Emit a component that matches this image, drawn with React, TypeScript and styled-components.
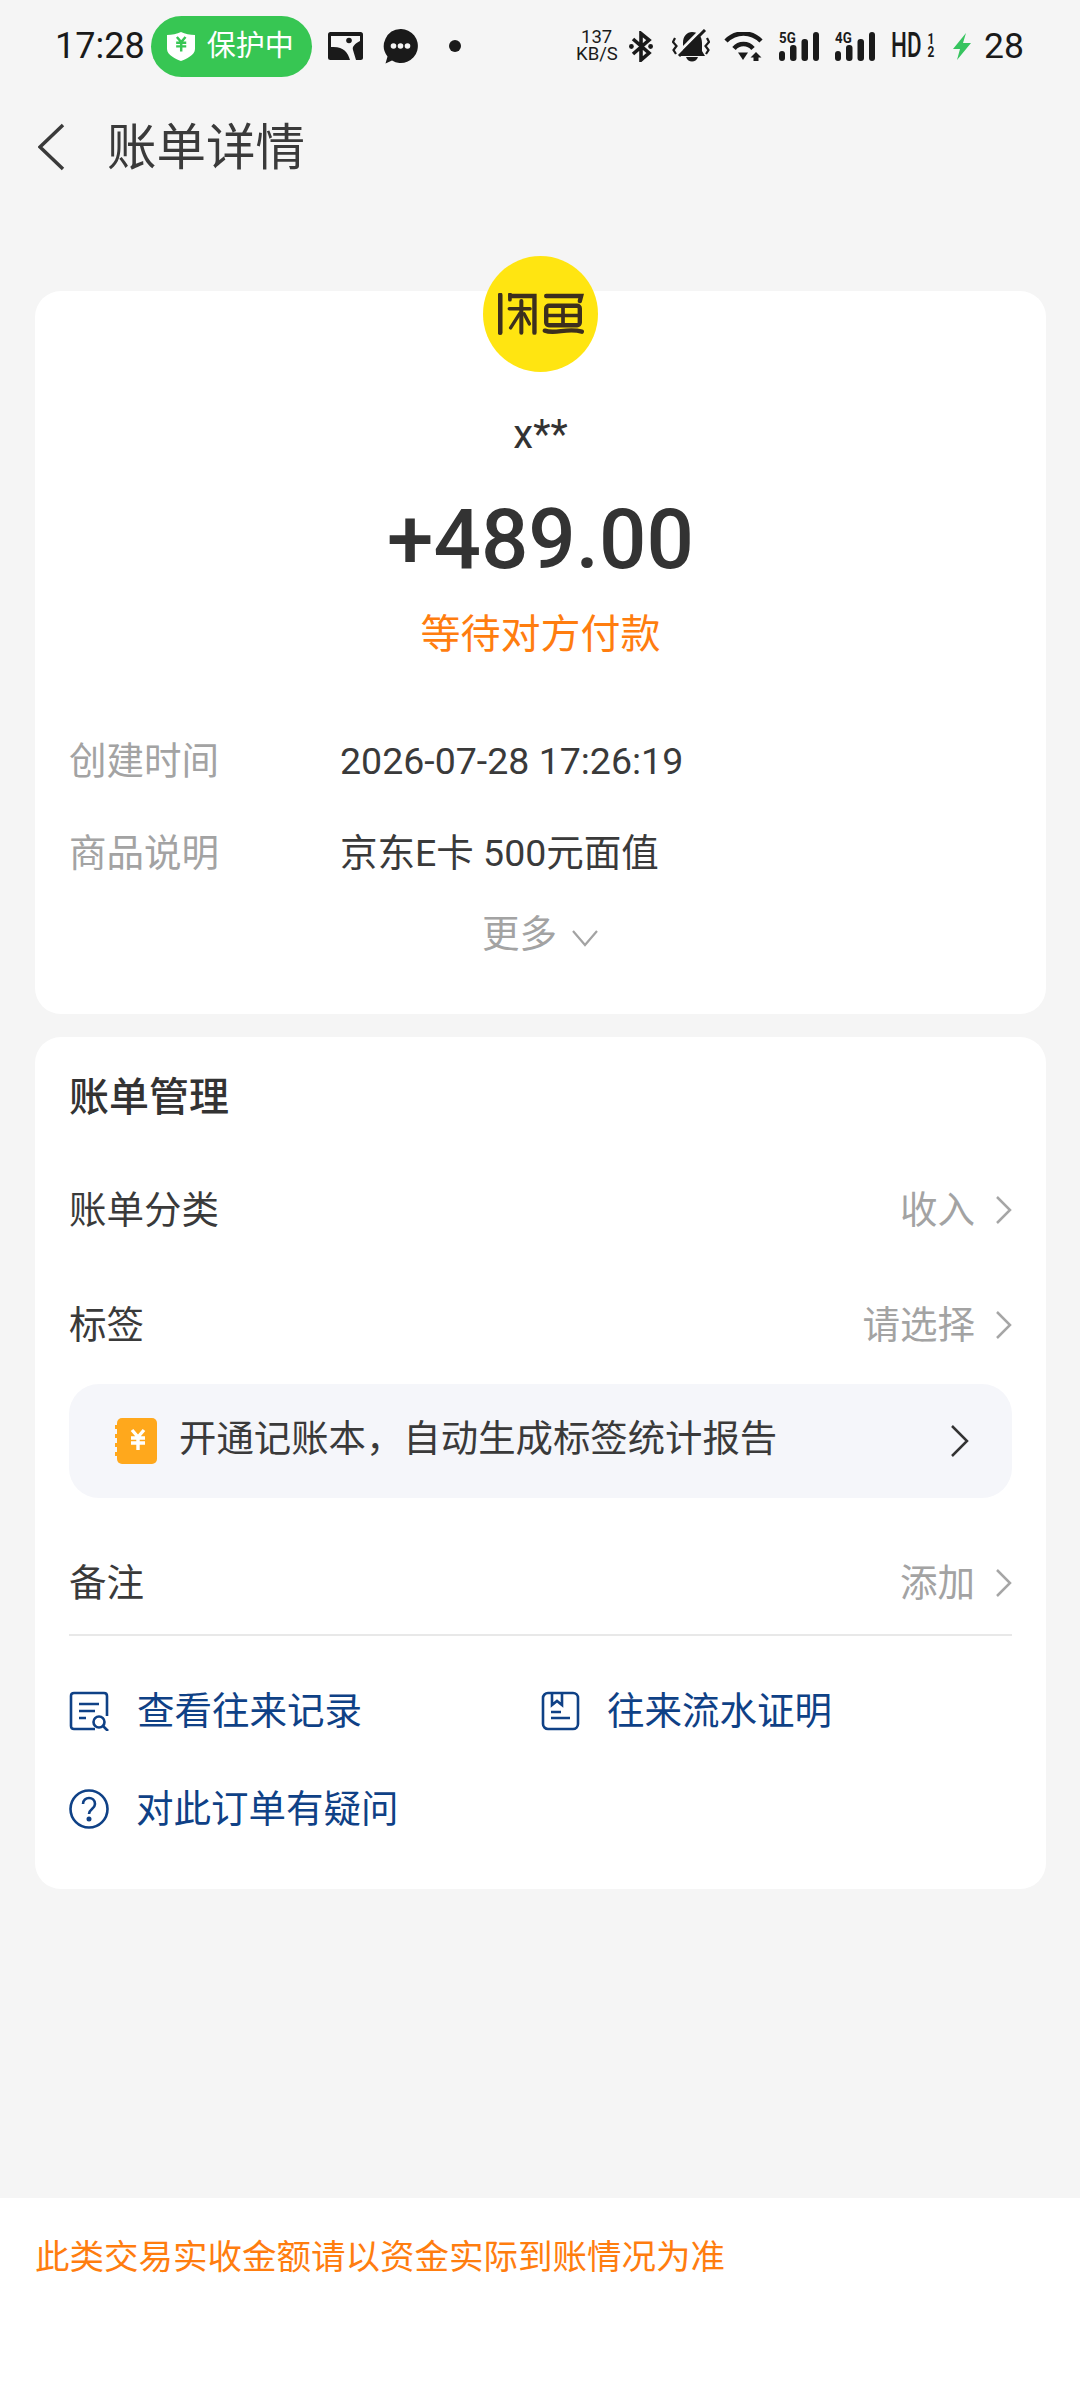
import React from 'react';
import styled, { createGlobalStyle } from 'styled-components';

const GlobalStyle = createGlobalStyle`
  html, body {
    margin: 0;
    padding: 0;
    background: #f5f5f5;
    font-family: Roboto, "Noto Sans CJK SC", sans-serif;
  }
`;

const Page = styled.div`
  width: 1080px;
  height: 2400px;
  display: flex;
  flex-direction: column;
  overflow: hidden;
  background: #f5f5f5;
  color: #333;
`;

const StatusBar = styled.div`
  height: 92px;
  flex: none;
  display: flex;
  align-items: center;
  justify-content: space-between;
  padding: 0 56px 0 55px;
  color: #1a1a1a;
`;

const StatusGroup = styled.div`
  display: flex;
  align-items: center;
`;

const Clock = styled.span`
  font-size: 36px;
  line-height: 40px;
`;

const Pill = styled.div`
  width: 161px;
  height: 61px;
  margin-left: 6px;
  border-radius: 31px;
  background: #37c653;
  color: #fff;
  display: flex;
  align-items: center;
  padding-left: 16px;
  box-sizing: border-box;
  font-size: 29px;
  line-height: 40px;
  gap: 12px;
`;

const Glyph = styled.svg<{ $gap?: number }>`
  display: block;
  flex: none;
  margin-left: ${(p) => p.$gap ?? 0}px;
`;

const Speed = styled.div`
  width: 41px;
  font-size: 18.5px;
  line-height: 17px;
  text-align: center;
  white-space: nowrap;
`;

const SignalWrap = styled.div<{ $gap: number }>`
  position: relative;
  width: 40px;
  height: 29px;
  margin-left: ${(p) => p.$gap}px;
`;

const SignalLabel = styled.span`
  position: absolute;
  left: 0;
  top: 0;
  font-size: 14px;
  line-height: 12px;
  font-weight: 700;
  transform: scaleX(0.95);
  transform-origin: left center;
`;

const Hd = styled.div`
  display: flex;
  align-items: center;
  margin-left: 16px;
  width: 44px;
`;

const HdText = styled.span`
  width: 36px;
  font-size: 35px;
  line-height: 32px;
  font-weight: 500;
  transform: scaleX(0.64);
  transform-origin: left center;
`;

const HdCard = styled.span`
  width: 8px;
  font-size: 14px;
  line-height: 13px;
  font-weight: 700;
  text-align: center;
  display: flex;
  flex-direction: column;
  transform: scaleX(0.85);
`;

const Battery = styled.span`
  font-size: 35.5px;
  line-height: 40px;
  margin-left: 13px;
`;

const NavBar = styled.div`
  height: 108px;
  flex: none;
  display: flex;
  align-items: center;
  padding: 2px 0 0 38px;
  box-sizing: border-box;
`;

const Title = styled.h1`
  margin: 0 0 0 42px;
  padding-top: 1px;
  font-size: 49.5px;
  line-height: 60px;
  font-weight: 400;
  color: #3a3a3a;
`;

const Card = styled.section<{ $top: number }>`
  margin: ${(p) => p.$top}px 34px 0 35px;
  background: #fff;
  border-radius: 26px;
  padding: 0 34px;
  flex: none;
  display: flex;
  flex-direction: column;
`;

const Avatar = styled.div`
  width: 115px;
  height: 116px;
  margin: -35px auto 0;
  border-radius: 50%;
  background: #ffe511;
  display: flex;
  align-items: center;
  justify-content: center;
`;

const Name = styled.div`
  margin-top: 38px;
  text-align: center;
  font-size: 40px;
  line-height: 50px;
`;

const Amount = styled.div`
  margin-top: 30px;
  text-align: center;
  font-size: 83.5px;
  line-height: 100px;
  font-weight: 500;
  color: #333;
`;

const Waiting = styled.div`
  margin-top: 17px;
  text-align: center;
  font-size: 40px;
  line-height: 56px;
  color: #ff7d0f;
`;

const InfoRow = styled.div<{ $top: number }>`
  margin-top: ${(p) => p.$top}px;
  display: flex;
  align-items: center;
  height: 50px;
  font-size: 37.5px;
  line-height: 50px;
`;

const InfoLabel = styled.span`
  width: 271px;
  color: #a3a3a3;
`;

const InfoValue = styled.span`
  color: #3a3a3a;
`;

const More = styled.div`
  margin: 31px 0 55px;
  height: 50px;
  display: flex;
  align-items: center;
  justify-content: center;
  gap: 14px;
  font-size: 37.5px;
  line-height: 50px;
  color: #a3a3a3;
`;

const MoreArrow = styled.span`
  margin-top: 8px;
`;

const SectionTitle = styled.h2`
  margin: 36px 0 0;
  font-size: 40px;
  line-height: 50px;
  font-weight: 500;
  color: #333;
`;

const ManageRow = styled.div<{ $top: number }>`
  margin-top: ${(p) => p.$top}px;
  height: 50px;
  display: flex;
  align-items: center;
  justify-content: space-between;
  font-size: 37.5px;
  line-height: 50px;
  color: #3a3a3a;
`;

const RowValue = styled.div`
  display: flex;
  align-items: center;
  gap: 20px;
  color: #a3a3a3;
`;

const Banner = styled.div`
  margin-top: 34px;
  height: 114px;
  border-radius: 30px;
  background: #f5f6fa;
  display: flex;
  align-items: center;
  padding: 0 43px 0 46px;
  font-size: 37.4px;
  line-height: 50px;
  color: #3a3a3a;
`;

const BannerText = styled.span`
  flex: 1;
  margin-left: 22px;
  padding-bottom: 5px;
`;

const Divider = styled.div`
  margin-top: 26px;
  height: 2px;
  background: #e8e8e8;
`;

const LinkGrid = styled.div`
  margin: 50px 0 55px;
  display: grid;
  grid-template-columns: 472px 1fr;
  row-gap: 48px;
`;

const LinkItem = styled.div`
  height: 50px;
  display: flex;
  align-items: center;
  gap: 27px;
  font-size: 37.5px;
  line-height: 50px;
  color: #0f4186;
`;

const Notice = styled.footer`
  margin-top: auto;
  height: 202px;
  flex: none;
  background: #fff;
  box-sizing: border-box;
  padding: 34px 35px 0;
  font-size: 34.5px;
  line-height: 50px;
  color: #ff7d0f;
`;

const Chevron = ({ dir = 'right', w, h, color, sw = 3 }: { dir?: 'right' | 'down' | 'left'; w: number; h: number; color: string; sw?: number }) => {
  const points =
    dir === 'right'
      ? `2,2 ${w - 2},${h / 2} 2,${h - 2}`
      : dir === 'left'
      ? `${w - 2},2 2,${h / 2} ${w - 2},${h - 2}`
      : `2,2 ${w / 2},${h - 2} ${w - 2},2`;
  return (
    <Glyph width={w} height={h} viewBox={`0 0 ${w} ${h}`}>
      <polyline points={points} fill="none" stroke={color} strokeWidth={sw} />
    </Glyph>
  );
};

const Bars = () => (
  <Glyph width="40" height="29" viewBox="0 0 40 29">
    <rect x="0" y="19" width="6" height="10" rx="3" fill="#1a1a1a" />
    <rect x="11" y="13" width="6.5" height="16" rx="3" fill="#1a1a1a" />
    <rect x="22.5" y="7" width="6.5" height="22" rx="3" fill="#1a1a1a" />
    <rect x="34" y="0" width="6" height="29" rx="3" fill="#1a1a1a" />
  </Glyph>
);

const YenMark = ({ x, y, s, color }: { x: number; y: number; s: number; color: string }) => (
  <g transform={`translate(${x} ${y}) scale(${s})`} fill="none" stroke={color} strokeWidth="3.4">
    <path d="M4 0 L10 7 L16 0 M3 8 H17 M3 13 H17 M10 7 V20" />
  </g>
);

const XianyuLogo = () => (
  <svg width="86" height="42" viewBox="55 68 255 125" fill="none" stroke="#3c2f1e" strokeLinecap="round">
    {/* left mark */}
    <path d="M61 74 V186" strokeWidth="14" />
    <path d="M90 72 V88" strokeWidth="11" />
    <path d="M92 77 H163 V186" strokeWidth="13" />
    <path d="M88 115 H150" strokeWidth="10" />
    <path d="M124 92 V186" strokeWidth="12" />
    <path d="M120 128 L92 172 M132 130 L148 160" strokeWidth="10" />
    {/* right mark */}
    <path d="M198 77 H302 L298 92" strokeWidth="13" />
    <rect x="198" y="106" width="100" height="58" rx="8" strokeWidth="13" />
    <path d="M198 135 H298" strokeWidth="11" />
    <path d="M248 106 V164" strokeWidth="11" />
    <path d="M194 180 C225 192 260 170 304 183" strokeWidth="13" />
  </svg>
);

const App = () => {
  return (
    <>
      <GlobalStyle />
      <Page>
        <StatusBar>
          <StatusGroup>
            <Clock>17:28</Clock>
            <Pill>
              <Glyph width="28" height="29" viewBox="0 0 28 29">
                <path d="M0 3 C5 3 10 2 14 0 C18 2 23 3 28 3 V17 C28 23 19 27 14 29 C9 27 0 23 0 17 Z" fill="#fff" />
                <YenMark x={7} y={5} s={0.72} color="#37c653" />
              </Glyph>
              <span>保护中</span>
            </Pill>
            <Glyph $gap={16} width="35" height="28" viewBox="0 0 35 28">
              <rect width="35" height="28" rx="2.5" fill="#1a1a1a" />
              <path d="M3 4 H32 V9 C27 12 24 14 25 18 L28 28 H22 C20 20 15 14 3 15 Z" fill="#f5f5f5" />
              <circle cx="21" cy="8.5" r="2.8" fill="#1a1a1a" />
            </Glyph>
            <Glyph $gap={20} width="35" height="35" viewBox="0 0 35 35">
              <path d="M17.5 0 A17 17 0 1 1 9 31.5 L2.5 34.5 L4.5 27.5 A17 17 0 0 1 17.5 0 Z" fill="#1a1a1a" />
              <circle cx="10.5" cy="17" r="2.8" fill="#f5f5f5" />
              <circle cx="17.5" cy="17" r="2.8" fill="#f5f5f5" />
              <circle cx="24.5" cy="17" r="2.8" fill="#f5f5f5" />
            </Glyph>
            <Glyph $gap={31} width="12" height="12" viewBox="0 0 12 12">
              <circle cx="6" cy="6" r="6" fill="#1a1a1a" />
            </Glyph>
          </StatusGroup>
          <StatusGroup>
            <Speed>137<br />KB/S</Speed>
            <Glyph $gap={12} width="24" height="31" viewBox="0 0 24 31">
              <path d="M4 8 L20 22 L12 29 V2.5 L20 9 L4 23" fill="none" stroke="#1a1a1a" strokeWidth="3.6" />
              <circle cx="2.4" cy="15.5" r="2.4" fill="#1a1a1a" />
              <circle cx="21.6" cy="15.5" r="2.4" fill="#1a1a1a" />
            </Glyph>
            <Glyph $gap={19} width="38" height="34" viewBox="0 0 38 34">
              <path d="M8 27 L11 22 V14 C11 7 15 3 20 3 C26 3 30 7 30 14 V22 L33 27 Z" fill="#1a1a1a" />
              <path d="M14 28 H26 C24 34 16 34 14 28 Z" fill="#1a1a1a" />
              <path d="M3 27 L29 1" stroke="#f5f5f5" strokeWidth="3" />
              <path d="M7 27 L33 1" stroke="#1a1a1a" strokeWidth="3" />
              <path d="M3 9 L1 13 L4.5 17 L1.5 21 L4 25 M35 9 L37 13 L33.5 17 L36.5 21 L34 25" fill="none" stroke="#1a1a1a" strokeWidth="2.2" />
            </Glyph>
            <Glyph $gap={14} width="39" height="29" viewBox="0 0 39 29">
              <path d="M2 9 C12 -1 27 -1 37 9" fill="none" stroke="#1a1a1a" strokeWidth="4.5" />
              <path d="M10 16.5 C15 10.5 24 10.5 29 16.5" fill="none" stroke="#1a1a1a" strokeWidth="4.5" />
              <path d="M14 20.5 H24 L19 28 Z" fill="#1a1a1a" />
              <path d="M32 20 L37.5 25.5 H34.5 V29 H29.5 V25.5 H26.5 Z" fill="#1a1a1a" />
            </Glyph>
            <SignalWrap $gap={16}>
              <SignalLabel>5G</SignalLabel>
              <Bars />
            </SignalWrap>
            <SignalWrap $gap={16}>
              <SignalLabel>4G</SignalLabel>
              <Bars />
            </SignalWrap>
            <Hd>
              <HdText>HD</HdText>
              <HdCard><span>1</span><span>2</span></HdCard>
            </Hd>
            <Glyph $gap={18} width="18" height="27" viewBox="0 0 18 27">
              <path d="M13 0 L0 16 H7 L4 27 L18 10 H10 Z" fill="#37c45f" />
            </Glyph>
            <Battery>28</Battery>
          </StatusGroup>
        </StatusBar>

        <NavBar>
          <Chevron dir="left" w={27} h={48} color="#3a3a3a" sw={3.5} />
          <Title>账单详情</Title>
        </NavBar>

        <Card $top={91}>
          <Avatar><XianyuLogo /></Avatar>
          <Name>x**</Name>
          <Amount>+489.00</Amount>
          <Waiting>等待对方付款</Waiting>
          <InfoRow $top={73}>
            <InfoLabel>创建时间</InfoLabel>
            <InfoValue>2026-07-28 17:26:19</InfoValue>
          </InfoRow>
          <InfoRow $top={42}>
            <InfoLabel>商品说明</InfoLabel>
            <InfoValue>京东E卡 500元面值</InfoValue>
          </InfoRow>
          <More>
            <span>更多</span>
            <MoreArrow><Chevron dir="down" w={28} h={18} color="#a3a3a3" sw={2.2} /></MoreArrow>
          </More>
        </Card>

        <Card $top={23}>
          <SectionTitle>账单管理</SectionTitle>
          <ManageRow $top={62}>
            <span>账单分类</span>
            <RowValue>收入<Chevron w={17} h={30} color="#a6a6a6" sw={2.5} /></RowValue>
          </ManageRow>
          <ManageRow $top={65}>
            <span>标签</span>
            <RowValue>请选择<Chevron w={17} h={30} color="#a6a6a6" sw={2.5} /></RowValue>
          </ManageRow>
          <Banner>
            <Glyph width="42" height="46" viewBox="0 0 42 46">
              <rect x="2" y="0" width="40" height="46" rx="5" fill="#ffa81c" />
              <path d="M0 9 H4 M0 18 H4 M0 27 H4 M0 36 H4" stroke="#ffa81c" strokeWidth="4" />
              <YenMark x={13} y={12} s={1} color="#fff" />
            </Glyph>
            <BannerText>开通记账本，自动生成标签统计报告</BannerText>
            <Chevron w={19} h={34} color="#333" sw={2.5} />
          </Banner>
          <ManageRow $top={60}>
            <span>备注</span>
            <RowValue>添加<Chevron w={17} h={30} color="#a6a6a6" sw={2.5} /></RowValue>
          </ManageRow>
          <Divider />
          <LinkGrid>
            <LinkItem>
              <Glyph width="41" height="40" viewBox="0 0 41 40" fill="none" stroke="#0f4186" strokeWidth="2.6">
                <path d="M26 38 H5 Q2 38 2 35 V5 Q2 2 5 2 H35 Q38 2 38 5 V25" />
                <path d="M10 13 H30 M10 20 H26 M10 27 H17" />
                <circle cx="30" cy="31" r="5.5" />
                <path d="M34 35 L39 40" />
              </Glyph>
              <span>查看往来记录</span>
            </LinkItem>
            <LinkItem>
              <Glyph width="39" height="40" viewBox="0 0 39 40" fill="none" stroke="#0f4186" strokeWidth="2.6">
                <rect x="2" y="2" width="35" height="36" rx="5" />
                <path d="M11 2 V14 L16 10 L21 14 V2" />
                <path d="M10 21 H20 M10 27 H29" />
              </Glyph>
              <span>往来流水证明</span>
            </LinkItem>
            <LinkItem>
              <Glyph width="40" height="40" viewBox="0 0 40 40" fill="none" stroke="#0f4186" strokeWidth="2.6">
                <circle cx="20" cy="20" r="18.5" />
                <path d="M14 15 C14 7 26 7 26 15 C26 20 20 20 20 25" />
                <circle cx="20" cy="30" r="1.2" fill="#0f4186" />
              </Glyph>
              <span>对此订单有疑问</span>
            </LinkItem>
          </LinkGrid>
        </Card>

        <Notice>此类交易实收金额请以资金实际到账情况为准</Notice>
      </Page>
    </>
  );
};

export default App;
